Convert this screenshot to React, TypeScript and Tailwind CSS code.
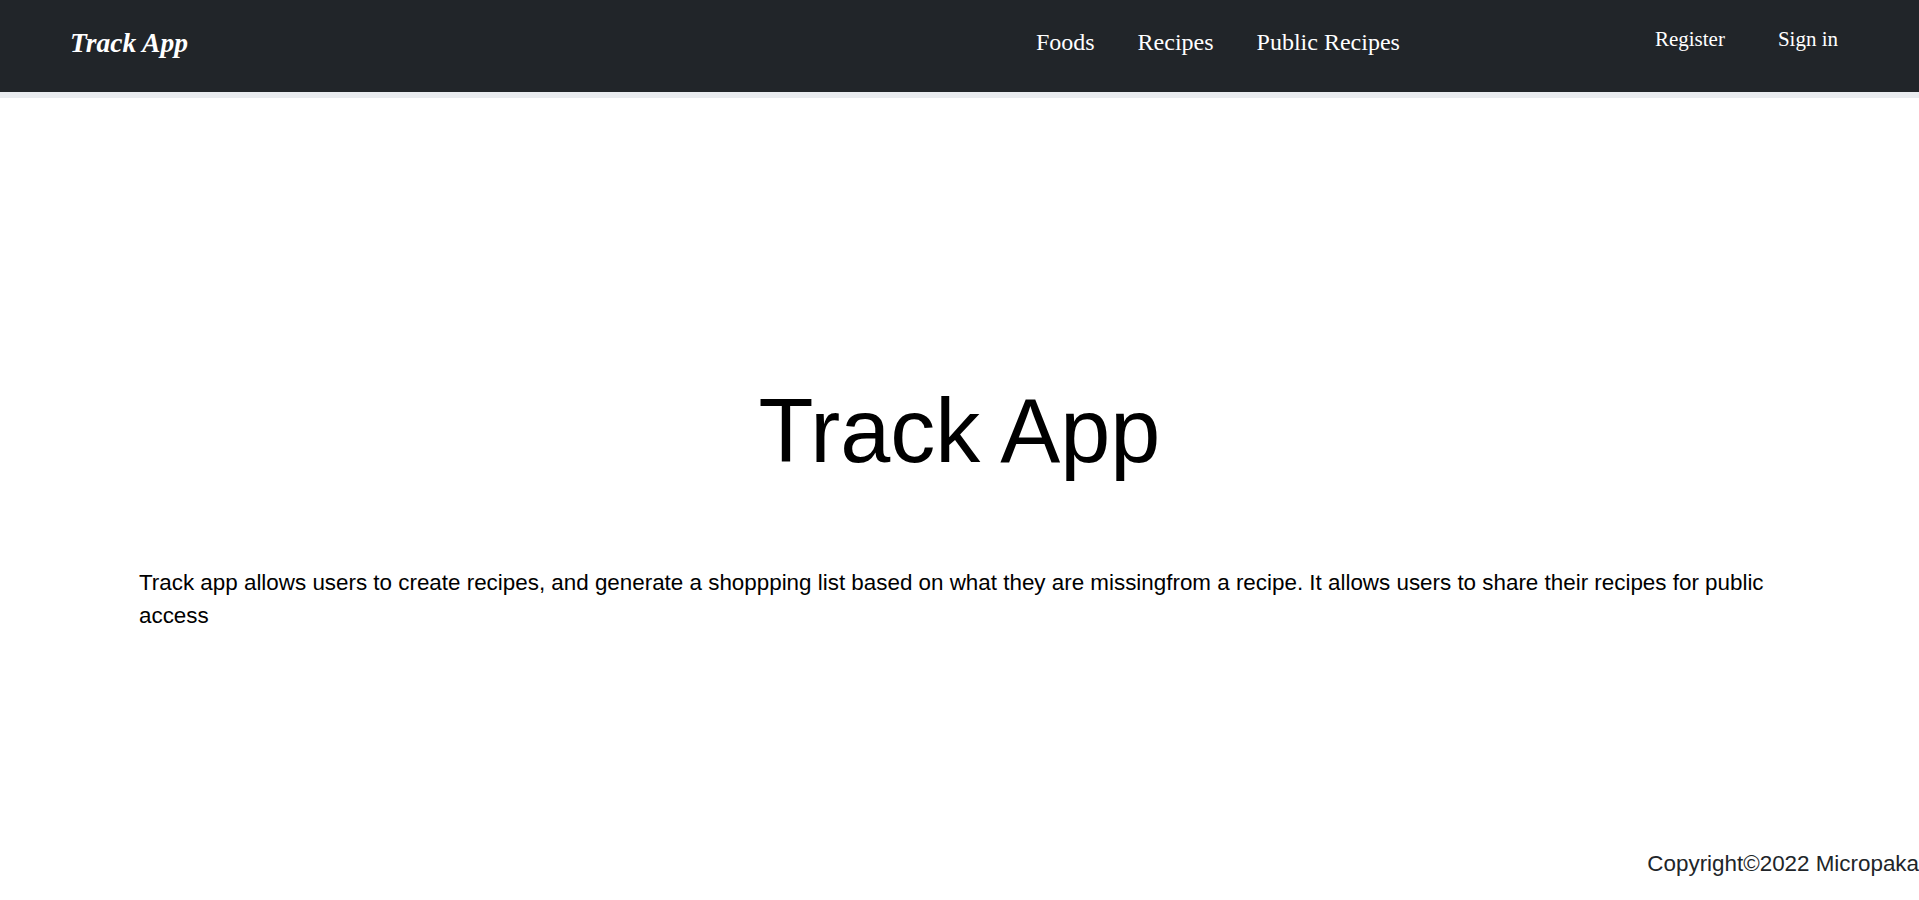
export default function App() {
  return (
    <div className="min-h-screen bg-white">
      {/* Navbar */}
      <header className="bg-[#212529] border-b-[6px] border-[#e9ecef] h-[98px] flex items-start pt-[29px] pl-[70px] pr-[72px] font-['Liberation_Serif','Times_New_Roman',serif] text-white">
        <a className="text-[27.5px] leading-none font-bold italic">Track App</a>
        <nav className="ml-auto flex gap-[43px] text-[24px] leading-none mt-[1px]">
          <a>Foods</a>
          <a>Recipes</a>
          <a>Public Recipes</a>
        </nav>
        <div className="ml-[255px] mr-[9px] flex gap-[53px] text-[21px] leading-none">
          <a>Register</a>
          <a>Sign in</a>
        </div>
      </header>

      <main className="font-['Liberation_Sans',Arial,sans-serif]">
        <h1 className="mt-[288px] text-center text-[90px] leading-none text-black">Track App</h1>
        <p className="mt-[90px] px-[139px] text-[22.4px] leading-[33px] text-black">
          Track app allows users to create recipes, and generate a shoppping list based on what they are missingfrom a recipe. It allows users to share their recipes for public access
        </p>
      </main>

      <footer className="mt-[215px] text-right font-['Liberation_Sans',Arial,sans-serif] text-[22.4px] leading-[33px] text-[#212529]">
        Copyright©2022 Micropaka
      </footer>
    </div>
  )
}
